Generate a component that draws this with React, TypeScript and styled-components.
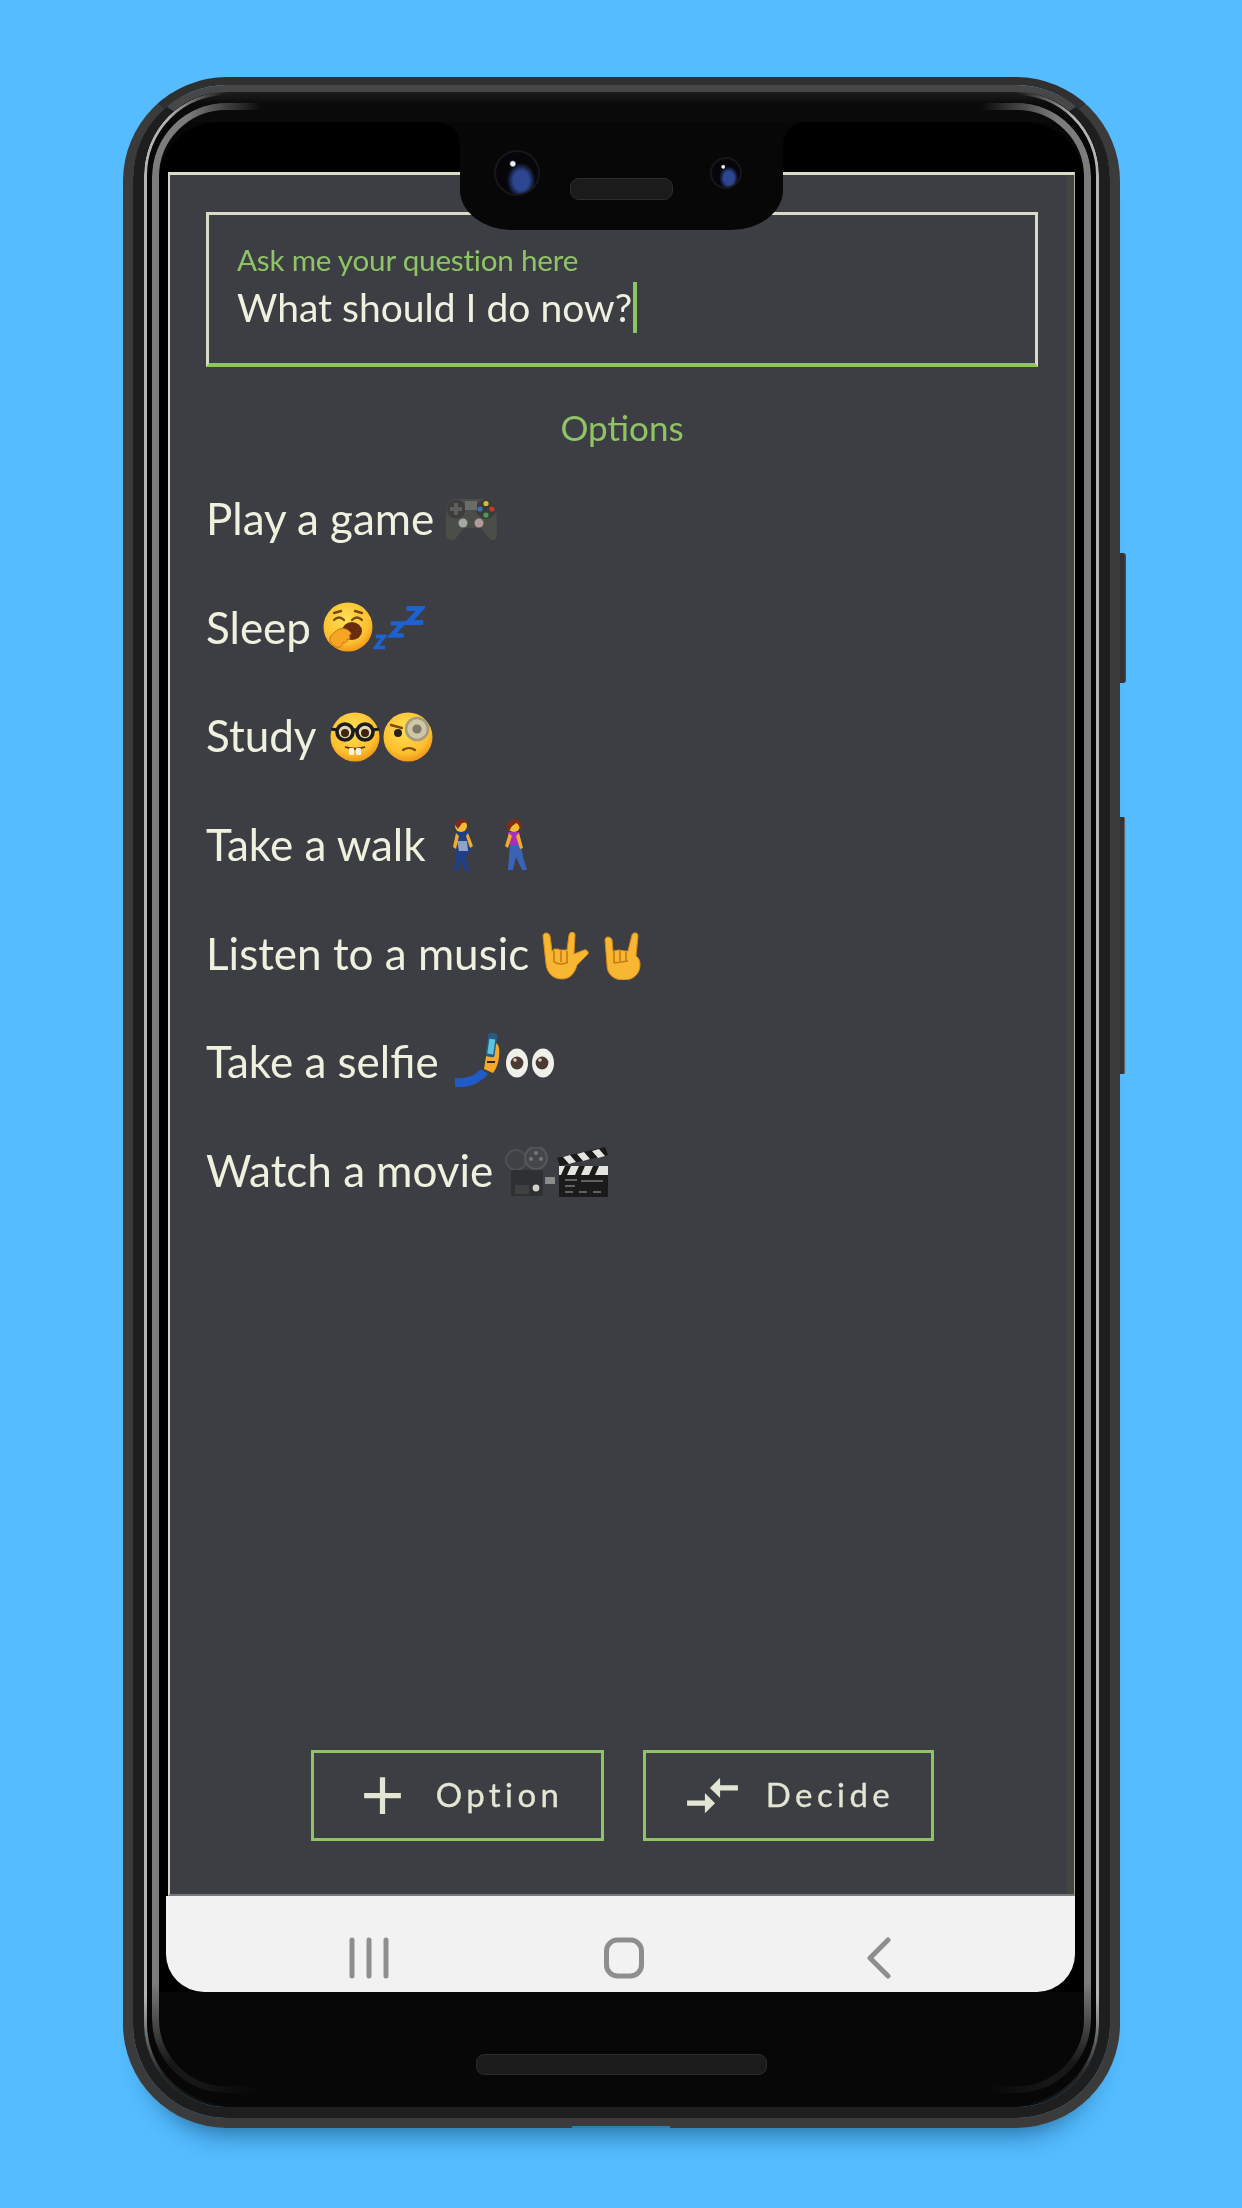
import React from "react";
import styled, { createGlobalStyle } from "styled-components";
import { MdAdd, MdCompareArrows } from "react-icons/md";

const GREEN = "#8fc465";
const CREAM = "#eff1df";

const Global = createGlobalStyle`
  html, body { margin: 0; padding: 0; background: #54bcff; }
  body { font-family: Lato, "Open Sans", sans-serif; }
`;

const Page = styled.div`
  width: 1242px;
  height: 2208px;
  box-sizing: border-box;
  padding: 77px 0 0 1px;
  display: flex;
  justify-content: center;
  align-items: flex-start;
  background: #54bcff;
  overflow: hidden;
`;

const Shell = styled.div`
  position: relative;
  width: 997px;
  height: 2051px;
  box-sizing: border-box;
  border: 10px solid #3b3b3b;
  border-top: 8px solid #303030;
  border-radius: 104px;
  box-shadow: 0 30px 24px -24px rgba(10, 60, 100, 0.6);
`;

const SideKey = styled.div<{ $top: number; $height: number; $edge: string }>`
  position: absolute;
  right: -16px;
  top: ${(p) => p.$top}px;
  width: 6px;
  height: ${(p) => p.$height}px;
  background: linear-gradient(to right, #333 0 60%, ${(p) => p.$edge});
  border-radius: 0 3px 3px 0;
`;

const BottomGroove = styled.div`
  position: absolute;
  left: 439px;
  bottom: -10px;
  width: 98px;
  height: 2px;
  background: #2a7fb5;
`;

const Band = styled.div`
  width: 100%;
  height: 100%;
  box-sizing: border-box;
  border: 11px solid #1e1e1e;
  border-top: 7px solid #474747;
  border-radius: 94px;
`;

const Bezel = styled.div`
  position: relative;
  width: 100%;
  height: 100%;
  display: flex;
  flex-direction: column;
  align-items: center;
  background: #070707;
  border-radius: 83px;
  overflow: hidden;
`;

const Ring = styled.div<{ $top: number; $side: number; $bottom: number; $width: number; $color: string; $radius: number; $start: number; $end: number }>`
  position: absolute;
  inset: ${(p) => p.$top}px ${(p) => p.$side}px ${(p) => p.$bottom}px;
  border: ${(p) => p.$width}px solid ${(p) => p.$color};
  border-radius: ${(p) => p.$radius}px;
  -webkit-mask-image:
    linear-gradient(to right, #000 ${(p) => p.$start}px, transparent ${(p) => p.$end}px, transparent calc(100% - ${(p) => p.$end}px), #000 calc(100% - ${(p) => p.$start}px)),
    linear-gradient(to bottom, #000 calc(100% - 110px), rgba(0, 0, 0, 0.15) calc(100% - 30px));
  mask-image:
    linear-gradient(to right, #000 ${(p) => p.$start}px, transparent ${(p) => p.$end}px, transparent calc(100% - ${(p) => p.$end}px), #000 calc(100% - ${(p) => p.$start}px)),
    linear-gradient(to bottom, #000 calc(100% - 110px), rgba(0, 0, 0, 0.15) calc(100% - 30px));
  -webkit-mask-composite: source-in;
  mask-composite: intersect;
`;

const TopStrip = styled.div`
  flex: 0 0 30px;
  width: 100%;
  background: linear-gradient(to bottom, #1e1e1e, #0a0a0a 40%);
`;

const Well = styled.div`
  position: relative;
  flex: 0 0 1870px;
  width: 925px;
  box-sizing: border-box;
  padding: 50px 9px 0;
  display: flex;
  background: #000;
  border-radius: 60px 60px 0 0;
`;

const Notch = styled.div`
  position: absolute;
  top: 0;
  left: 301px;
  width: 323px;
  height: 108px;
  box-sizing: border-box;
  padding: 28px 0 0 34px;
  display: flex;
  align-items: flex-start;
  background: #070707;
  border-radius: 0 0 52px 52px / 0 0 40px 40px;
  z-index: 3;
  &::before, &::after {
    content: "";
    position: absolute;
    top: 0;
    width: 22px;
    height: 22px;
  }
  &::before {
    left: -22px;
    background: radial-gradient(circle at 0 100%, transparent 21.5px, #070707 22px);
  }
  &::after {
    right: -22px;
    background: radial-gradient(circle at 100% 100%, transparent 21.5px, #070707 22px);
  }
`;

const Camera = styled.div<{ $size: number; $gap: number; $down: number }>`
  flex: none;
  width: ${(p) => p.$size}px;
  height: ${(p) => p.$size}px;
  margin: ${(p) => p.$down}px 0 0 ${(p) => p.$gap}px;
  border-radius: 50%;
  border: 2px solid #17171b;
  box-sizing: border-box;
  background:
    radial-gradient(circle at 40% 28%, #eef 0 5%, transparent 9%),
    radial-gradient(ellipse 34% 42% at 60% 68%, #2c4690 0 55%, transparent 100%),
    #06060a;
`;

const Grille = styled.div<{ $w: number; $h: number; $gap?: number; $down?: number }>`
  flex: none;
  width: ${(p) => p.$w}px;
  height: ${(p) => p.$h}px;
  margin: ${(p) => p.$down ?? 0}px 0 0 ${(p) => p.$gap ?? 0}px;
  box-sizing: border-box;
  border: 1px solid #2d2d2d;
  border-radius: ${(p) => p.$h / 2 - 2}px;
  background: #1b1b1b;
`;

const Screen = styled.div`
  flex: 1;
  display: flex;
  flex-direction: column;
  min-width: 0;
`;

const Content = styled.main`
  flex: 1;
  box-sizing: border-box;
  padding: 37px 36px 53px 36px;
  display: flex;
  flex-direction: column;
  background: #3c3e44;
  border-top: 3px solid #d9dcc9;
  border-left: 2px solid #d3d6c3;
  border-right: 1px solid #a9aba0;
  border-bottom: 2px solid #77787a;
  box-shadow: inset -7px 0 0 #44453f;
  filter: blur(0.45px);
`;

const InputBox = styled.div`
  flex: 0 0 155px;
  box-sizing: border-box;
  padding: 28px 28px 0;
  border: 3px solid #d8dcc6;
  border-bottom: 4px solid ${GREEN};
`;

const FieldLabel = styled.div`
  font-size: 29.6px;
  line-height: 34px;
  letter-spacing: -0.2px;
  color: ${GREEN};
`;

const FieldValue = styled.div`
  display: flex;
  align-items: center;
  margin-top: 5px;
  font-size: 39px;
  line-height: 51px;
  color: ${CREAM};
`;

const Caret = styled.span`
  width: 4px;
  height: 51px;
  background: ${GREEN};
  margin-left: 1px;
`;

const Heading = styled.h2`
  margin: 39px 0 0;
  text-align: center;
  font-size: 35px;
  line-height: 42px;
  font-weight: 400;
  color: ${GREEN};
`;

const OptionList = styled.ul`
  list-style: none;
  margin: 16px 0 0;
  padding: 0;
  display: flex;
  flex-direction: column;
  flex: 1;
`;

const OptionRow = styled.li`
  height: 108.7px;
  line-height: 108.7px;
  font-size: 44px;
  color: ${CREAM};
  white-space: nowrap;
`;

const Emoji = styled.svg<{ $w: number; $h: number; $drop: number; $gap: number }>`
  display: inline-block;
  width: ${(p) => p.$w}px;
  height: ${(p) => p.$h}px;
  vertical-align: ${(p) => -p.$drop}px;
  margin-left: ${(p) => p.$gap}px;
`;

const ButtonRow = styled.div`
  display: flex;
  justify-content: center;
  gap: 39px;
`;

const ActionButton = styled.button<{ $w: number; $gap: number }>`
  width: ${(p) => p.$w}px;
  height: 91px;
  box-sizing: border-box;
  padding: 0;
  display: flex;
  align-items: center;
  justify-content: center;
  gap: ${(p) => p.$gap}px;
  background: transparent;
  border: 3px solid ${GREEN};
  color: #e3e6d3;
  font-family: Lato, sans-serif;
  font-size: 33px;
  letter-spacing: 4.4px;
`;

const ButtonLabel = styled.span`
  margin-top: -3px;
  -webkit-text-stroke: 0.3px #e3e6d3;
`;

const NavBar = styled.nav`
  flex: 0 0 96px;
  box-sizing: border-box;
  margin-left: -2px;
  padding-top: 41px;
  display: flex;
  align-items: flex-start;
  background: #f2f2f2;
  border-radius: 0 0 38px 38px;
`;

const NavSlot = styled.svg<{ $w: number; $left: number }>`
  flex: none;
  width: ${(p) => p.$w}px;
  height: 42px;
  margin-left: ${(p) => p.$left}px;
`;

const Chin = styled.div`
  flex: 0 0 115px;
  width: 100%;
  box-sizing: border-box;
  padding-top: 62px;
  display: flex;
  justify-content: center;
`;

const Face = ({ id }: { id: string }) => (
  <>
    <defs>
      <radialGradient id={id} cx="45%" cy="35%" r="70%">
        <stop offset="0" stopColor="#ffdf55" />
        <stop offset="0.7" stopColor="#fcbf2d" />
        <stop offset="1" stopColor="#ee8a14" />
      </radialGradient>
    </defs>
    <circle cx="25" cy="25" r="24.5" fill={`url(#${id})`} />
  </>
);

const App = () => (
  <Page>
    <Global />
    <Shell>
      <SideKey $top={468} $height={130} $edge="#4a4a4a" />
      <SideKey $top={732} $height={257} $edge="#b5b5b5" />
      <BottomGroove />
      <Band>
        <Bezel>
          <Ring $top={0} $side={0} $bottom={0} $width={3} $color="#b4b4b4" $radius={83} $start={25} $end={80} />
          <Ring $top={11} $side={8} $bottom={14} $width={7} $color="#7c7c7c" $radius={74} $start={35} $end={110} />
          <TopStrip />
          <Well>
            <Notch>
              <Camera $size={46} $gap={0} $down={0} />
              <Grille $w={103} $h={22} $gap={30} $down={28} />
              <Camera $size={32} $gap={37} $down={7} />
            </Notch>
            <Screen>
              <Content>
                <InputBox>
                  <FieldLabel>Ask me your question here</FieldLabel>
                  <FieldValue>
                    What should I do now?
                    <Caret />
                  </FieldValue>
                </InputBox>
                <Heading>Options</Heading>
                <OptionList>
                  <OptionRow>
                    Play a game
                    <Emoji $w={52} $h={43} $drop={6} $gap={11} viewBox="0 0 52 43">
                      <path d="M10 1h32c6 0 9 4 9 11 1 10 1 20 1 25 0 5-5 7-8 3l-8-10H19l-8 10c-3 4-10 2-10-3V12C1 5 4 1 10 1z" fill="#4b4d48" />
                      <circle cx="11" cy="11" r="9.5" fill="#3c3d3c" />
                      <path d="M9 5h4v4h4v4h-4v4H9v-4H5V9h4z" fill="#5c5e5b" />
                      <circle cx="41" cy="11" r="10" fill="#3a3b3c" />
                      <circle cx="41" cy="5.5" r="2.6" fill="#d8b93a" />
                      <circle cx="47" cy="11" r="2.6" fill="#c23a34" />
                      <circle cx="35" cy="11" r="2.6" fill="#3f70b5" />
                      <circle cx="41" cy="17" r="2.6" fill="#4e9a55" />
                      <path d="M20 3h12v9H20z" fill="#6a6c68" />
                      <circle cx="18" cy="25" r="4.5" fill="#a5a7a2" />
                      <circle cx="34" cy="25" r="4.5" fill="#b39a9a" />
                    </Emoji>
                  </OptionRow>
                  <OptionRow>
                    Sleep
                    <Emoji $w={50} $h={50} $drop={8} $gap={12} viewBox="0 0 50 50">
                      <Face id="fy" />
                      <path d="M11 11l7-2M39 11l-7-2M11 18q5-5 10 0M29 18q5-5 10 0" stroke="#7a4a12" strokeWidth="2.4" fill="none" strokeLinecap="round" />
                      <ellipse cx="29" cy="29" rx="10" ry="9" fill="#6b2d10" />
                      <path d="M12 30c4-5 11-4 14-1 3 2 2 4 0 4 2 3 0 5-2 4 1 3-2 5-4 3 0 4-3 6-6 5-4-1-7-4-7-8 0-3 2-5 5-7z" fill="#f6a623" stroke="#c97410" strokeWidth="1" />
                    </Emoji>
                    <Emoji $w={52} $h={52} $drop={10} $gap={0} viewBox="0 0 56 52">
                      <g fill="none" stroke="#1e62d0" strokeLinejoin="miter">
                        <path d="M36 5h16L38 20h16" strokeWidth="5.5" />
                        <path d="M19 21h13L20 34h13" strokeWidth="4.8" />
                        <path d="M3 35h9L3 47h10" strokeWidth="4" />
                      </g>
                    </Emoji>
                  </OptionRow>
                  <OptionRow>
                    Study
                    <Emoji $w={50} $h={50} $drop={10} $gap={13} viewBox="0 0 50 50">
                      <Face id="fn" />
                      <circle cx="15" cy="20" r="8" fill="#e8d8ae" stroke="#1c1c1c" strokeWidth="3.6" />
                      <circle cx="35" cy="20" r="8" fill="#e8d8ae" stroke="#1c1c1c" strokeWidth="3.6" />
                      <path d="M1 17l7 1M42 18l7-1M22 19q3-2 6 0" stroke="#1c1c1c" strokeWidth="3.2" fill="none" />
                      <circle cx="15" cy="21" r="4" fill="#3a2414" />
                      <circle cx="35" cy="21" r="4" fill="#3a2414" />
                      <path d="M15 35q10 4 20 0q-10 3-20 0z" fill="#6b2d10" stroke="#6b2d10" strokeWidth="1.6" />
                      <rect x="19" y="36" width="5" height="7" rx="1" fill="#f6f2e2" />
                      <rect x="26" y="36" width="5" height="7" rx="1" fill="#f6f2e2" />
                    </Emoji>
                    <Emoji $w={50} $h={50} $drop={10} $gap={3} viewBox="0 0 50 50">
                      <Face id="fm" />
                      <circle cx="15" cy="21" r="4" fill="#27211c" />
                      <path d="M8 13l11 3" stroke="#7a4a12" strokeWidth="2.4" strokeLinecap="round" />
                      <circle cx="34" cy="17" r="11" fill="#cfc7a8" stroke="#a59c7e" strokeWidth="2.6" />
                      <circle cx="34" cy="17" r="4.6" fill="#7d7868" />
                      <path d="M20 38q6-4 12 0" stroke="#7a4a12" strokeWidth="2.2" fill="none" strokeLinecap="round" />
                    </Emoji>
                  </OptionRow>
                  <OptionRow>
                    Take a walk
                    <Emoji $w={24} $h={54} $drop={11} $gap={25} viewBox="0 0 24 54">
                      <path d="M4 14l14 0 2 20-4 0-1 8 4 11-5 0-4-10-3 10-4 0 2-16 1-10z" fill="#1f3f86" />
                      <path d="M6 23l10 0 1 10-9 0z" fill="#8ea3c7" />
                      <path d="M5 15l-3 14 3 2 3-13zM17 15l5 13-3 2-4-12z" fill="#f1ab2d" />
                      <circle cx="10" cy="8" r="6" fill="#f6bb33" />
                      <path d="M4 7c0-7 11-9 13-2-3-1-4 0-6 0-1 2-3 4-4 6z" fill="#7a2d1a" />
                    </Emoji>
                    <Emoji $w={24} $h={54} $drop={11} $gap={28} viewBox="0 0 24 54">
                      <path d="M5 14h11l3 14H7z" fill="#a52fb8" />
                      <path d="M7 27h11l2 12 4 13h-5l-6-13-3 13H5l1-14z" fill="#3a62b5" />
                      <path d="M6 15l-4 13 3 2 4-12zM16 15l4 15-3 1-4-13z" fill="#f1ab2d" />
                      <circle cx="11" cy="8" r="6" fill="#f6bb33" />
                      <path d="M4 12C1 3 12-2 17 3c3 3 2 7 1 9-2-3-2-6-5-7-2 2-5 3-6 7z" fill="#7a2d1a" />
                    </Emoji>
                  </OptionRow>
                  <OptionRow>
                    Listen to a music
                    <Emoji $w={50} $h={48} $drop={10} $gap={12} viewBox="0 0 50 48">
                      <path d="M2 4c0-4 6-4 7 0l2 15 2-1V17h4l2 1h4l3 0 2-15c1-4 6-4 6 0l-1 19 10-4c3-1 6 3 3 5L36 33c-2 8-7 14-15 14C11 47 6 40 5 32z" fill="#f7b733" stroke="#d98a15" strokeWidth="1" />
                      <path d="M13 19v11M20 19v11M26 19v11M13 30q7 4 14 0" stroke="#c77a12" strokeWidth="1.6" fill="none" />
                    </Emoji>
                    <Emoji $w={37} $h={48} $drop={10} $gap={13} viewBox="0 0 37 48">
                      <path d="M1 8c0-4 6-4 7 0l1 11 6-1 6 1 3 0 4-16c1-3 6-3 6 1l-2 20c3 2 4 5 4 9 0 9-7 15-16 15C8 48 3 41 3 33z" fill="#f7b733" stroke="#d98a15" strokeWidth="1" />
                      <path d="M10 19v12M16 19v10M22 20v9M10 31l14-2" stroke="#c77a12" strokeWidth="1.6" fill="none" />
                    </Emoji>
                  </OptionRow>
                  <OptionRow>
                    Take a selfie
                    <Emoji $w={48} $h={57} $drop={10} $gap={14} viewBox="0 0 48 57">
                      <path d="M2 47c10 1 18-1 26-9l7 5c-8 9-18 14-33 13z" fill="#1f5bc9" />
                      <path d="M31 38c1-6 2-14 4-22 2-6 10-6 11 1 1 9-1 19-6 25z" fill="#f3a929" />
                      <rect x="34" y="2" width="9" height="24" rx="2" transform="rotate(8 38 14)" fill="#2a5a82" />
                      <rect x="35.5" y="8" width="6" height="15" fill="#5ac4dc" transform="rotate(8 38 14)" />
                      <path d="M34 31l8 0" stroke="#3a2414" strokeWidth="2" />
                    </Emoji>
                    <Emoji $w={48} $h={30} $drop={0} $gap={5} viewBox="0 0 48 30">
                      <ellipse cx="11" cy="15" rx="11" ry="14.5" fill="#f0f0ea" />
                      <ellipse cx="37" cy="15" rx="11" ry="14.5" fill="#f0f0ea" />
                      <circle cx="11" cy="15" r="6.4" fill="#4a3a32" />
                      <circle cx="36" cy="15" r="6.4" fill="#4a3a32" />
                      <circle cx="9" cy="12" r="1.8" fill="#d9c9c2" />
                      <circle cx="34" cy="12" r="1.8" fill="#d9c9c2" />
                    </Emoji>
                  </OptionRow>
                  <OptionRow>
                    Watch a movie
                    <Emoji $w={52} $h={50} $drop={10} $gap={11} viewBox="0 0 52 50">
                      <circle cx="12" cy="13" r="10" fill="#3f4145" stroke="#4e5054" strokeWidth="2" />
                      <circle cx="32" cy="11" r="11" fill="#44464a" stroke="#55575a" strokeWidth="2" />
                      <circle cx="32" cy="6" r="2" fill="#77797c" />
                      <circle cx="27" cy="12" r="2" fill="#77797c" />
                      <circle cx="37" cy="12" r="2" fill="#77797c" />
                      <rect x="7" y="23" width="32" height="26" rx="2" fill="#2f3032" />
                      <rect x="11" y="38" width="14" height="9" fill="#3f4042" />
                      <circle cx="32" cy="41" r="3.4" fill="#d2d2cd" />
                      <rect x="41" y="30" width="10" height="7" fill="#8b8d8a" />
                    </Emoji>
                    <Emoji $w={51} $h={50} $drop={10} $gap={1} viewBox="0 0 51 50">
                      <path d="M0 11L48 0l3 8L3 19z" fill="#1a1a1a" />
                      <path d="M6 10l6 7 7-2-6-7zM20 7l6 7 7-2-6-7zM35 4l6 7 7-2-6-7z" fill="#e4e4e0" />
                      <rect x="2" y="19" width="49" height="31" fill="#1b1b1c" />
                      <rect x="2" y="19" width="49" height="9" fill="#e4e4e0" />
                      <path d="M8 19l-4 9h6l4-9zM22 19l-4 9h6l4-9zM36 19l-4 9h6l4-9z" fill="#1b1b1c" />
                      <path d="M8 33h12M24 34h22M8 39h10M8 45h8M22 45h8M36 45h8" stroke="#77797a" strokeWidth="1.6" />
                    </Emoji>
                  </OptionRow>
                </OptionList>
                <ButtonRow>
                  <ActionButton $w={293} $gap={22} type="button">
                    <MdAdd size={63} />
                    <ButtonLabel>Option</ButtonLabel>
                  </ActionButton>
                  <ActionButton $w={291} $gap={23} type="button">
                    <MdCompareArrows size={61} />
                    <ButtonLabel>Decide</ButtonLabel>
                  </ActionButton>
                </ButtonRow>
              </Content>
              <NavBar>
                <NavSlot $w={42} $left={182} viewBox="0 0 42 42">
                  <path d="M4 3v36M21 3v36M38 3v36" stroke="#8e8e8e" strokeWidth="5" strokeLinecap="round" />
                </NavSlot>
                <NavSlot $w={42} $left={213} viewBox="0 0 42 42">
                  <rect x="3.5" y="3" width="35" height="36" rx="11" fill="none" stroke="#8e8e8e" strokeWidth="5" />
                </NavSlot>
                <NavSlot $w={24} $left={222} viewBox="0 0 24 42">
                  <path d="M21 3L3 21l18 18" fill="none" stroke="#8e8e8e" strokeWidth="5" strokeLinecap="round" strokeLinejoin="round" />
                </NavSlot>
              </NavBar>
            </Screen>
          </Well>
          <Chin>
            <Grille $w={291} $h={21} />
          </Chin>
        </Bezel>
      </Band>
    </Shell>
  </Page>
);

export default App;
